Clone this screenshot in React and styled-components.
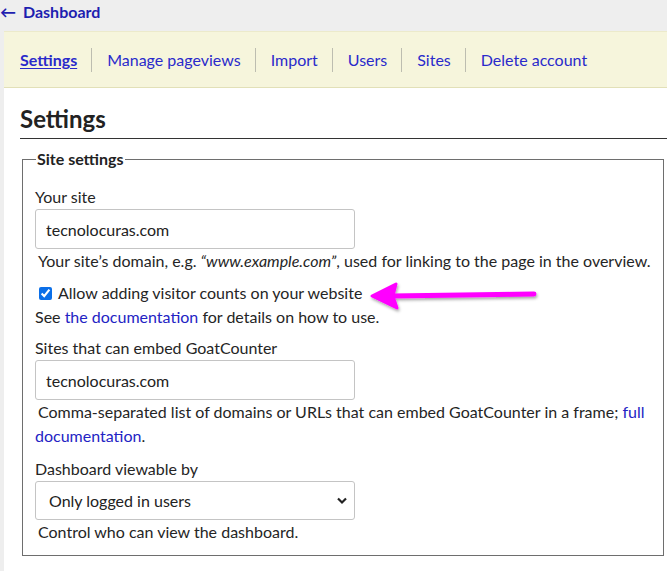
import React from 'react';
import styled, { createGlobalStyle } from 'styled-components';

const GlobalStyle = createGlobalStyle`
  html, body {
    margin: 0;
    padding: 0;
    background: #eee;
  }
  body {
    font-family: Lato, "Open Sans", sans-serif;
    font-size: 16px;
    line-height: 24px;
    color: #252525;
  }
  a {
    color: #2323c4;
    text-decoration: none;
  }
`;

const Page = styled.div`
  width: 667px;
  height: 571px;
  overflow: hidden;
`;

const Back = styled.a`
  display: block;
  height: 31px;
  line-height: 23px;
  font-size: 16px;
  font-weight: 700;
  color: #1e1eb0;
`;

const BackArrow = styled.span`
  margin-right: 7px;
`;

const Main = styled.div`
  margin-left: 4px;
  background: #fff;
  min-height: 600px;
`;

const Nav = styled.nav`
  display: flex;
  align-items: center;
  height: 55px;
  padding-left: 16px;
  background: #f6f5dc;
  border-top: 1px solid #eceacb;
  border-bottom: 1px solid #e2e0b8;
`;

const NavLink = styled.a`
  font-size: 16px;
  line-height: 22px;
  color: #2a2acb;
  text-decoration: ${(p) => (p.$active ? 'underline' : 'none')};
  font-weight: ${(p) => (p.$active ? 700 : 400)};
  text-underline-offset: 2px;
`;

const Sep = styled.span`
  width: 1px;
  height: 24px;
  margin: 0 15px 0 14px;
  background: #bdbdb0;
`;

const Content = styled.div`
  position: relative;
  padding: 0 0 0 16px;
`;

const Heading = styled.h1`
  margin: 0;
  padding-top: 14px;
  font-size: 24px;
  line-height: 34px;
  font-weight: 700;
  color: #222;
  border-bottom: 1px solid #333;
  height: 36px;
`;

const Fieldset = styled.fieldset`
  margin: 8px 3px 0 2px;
  padding: 0 12px 11px 12px;
  border: 1px solid #6e6e6e;
`;

const Legend = styled.legend`
  padding: 0 1px;
  margin-left: 1px;
  font-size: 16px;
  font-weight: 700;
  line-height: 24px;
  color: #222;
`;

const Field = styled.div`
  display: flex;
  flex-direction: column;
  align-items: flex-start;
  padding-top: ${(p) => p.$top || 0}px;
`;

const Label = styled.label`
  line-height: 24px;
`;

const TextInput = styled.input`
  box-sizing: border-box;
  width: 320px;
  height: 40px;
  padding: 0 10px;
  border: 1px solid #c4c4c4;
  border-radius: 3px;
  font: inherit;
  font-size: 16px;
  color: #222;
  background: #fff;
  outline: none;
`;

const SelectWrap = styled.div`
  position: relative;
  width: 320px;
  height: 39px;
`;

const Select = styled.select`
  box-sizing: border-box;
  width: 100%;
  height: 100%;
  padding: 0 13px;
  appearance: none;
  border: 1px solid #c4c4c4;
  border-radius: 3px;
  font: inherit;
  font-size: 16px;
  color: #222;
  background: #fff;
`;

const Chevron = styled.svg`
  position: absolute;
  right: 7px;
  top: 15px;
  pointer-events: none;
`;

const Help = styled.div`
  padding-left: ${(p) => (p.$wrap ? 0 : 3)}px;
  text-indent: ${(p) => (p.$wrap ? 3 : 0)}px;
  line-height: 24px;
`;

const CheckRow = styled.label`
  display: flex;
  align-items: center;
  gap: 6px;
  margin-top: 8px;
  padding-left: 3px;
  line-height: 24px;
`;

const Check = styled.input`
  width: 13px;
  height: 13px;
  margin: 0 0 0 1px;
  accent-color: #0b6fe8;
`;

const Arrow = styled.svg`
  position: absolute;
  left: 362px;
  top: 185px;
`;

export default function App() {
  return (
    <Page>
      <GlobalStyle />
      <Back href="#"><BackArrow>←</BackArrow>Dashboard</Back>
      <Main>
        <Nav>
          <NavLink href="#" $active>Settings</NavLink>
          <Sep />
          <NavLink href="#">Manage pageviews</NavLink>
          <Sep />
          <NavLink href="#">Import</NavLink>
          <Sep />
          <NavLink href="#">Users</NavLink>
          <Sep />
          <NavLink href="#">Sites</NavLink>
          <Sep />
          <NavLink href="#">Delete account</NavLink>
        </Nav>
        <Content>
          <Heading>Settings</Heading>
          <Fieldset>
            <Legend>Site settings</Legend>
            <Field $top={14}>
              <Label>Your site</Label>
              <TextInput defaultValue="tecnolocuras.com" />
              <Help>
                Your site’s domain, e.g. <i>“www.example.com”</i>, used for linking to the page in the overview.
              </Help>
            </Field>
            <CheckRow>
              <Check type="checkbox" defaultChecked />
              Allow adding visitor counts on your website
            </CheckRow>
            <div>
              See <a href="#">the documentation</a> for details on how to use.
            </div>
            <Field $top={7}>
              <Label>Sites that can embed GoatCounter</Label>
              <TextInput defaultValue="tecnolocuras.com" />
              <Help $wrap>
                Comma-separated list of domains or URLs that can embed GoatCounter in a frame; <a href="#">full documentation</a>.
              </Help>
            </Field>
            <Field $top={9}>
              <Label>Dashboard viewable by</Label>
              <SelectWrap>
                <Select defaultValue="logged">
                  <option value="logged">Only logged in users</option>
                  <option value="all">Anyone</option>
                </Select>
                <Chevron width="12" height="9" viewBox="0 0 12 9">
                  <path d="M2 2.5 L6 6.5 L10 2.5" fill="none" stroke="#222" strokeWidth="2.2" />
                </Chevron>
              </SelectWrap>
              <Help>Control who can view the dashboard.</Help>
            </Field>
          </Fieldset>
          <Arrow width="180" height="46" viewBox="0 0 180 46">
            <defs>
              <filter id="sh" x="-10%" y="-30%" width="130%" height="160%">
                <feDropShadow dx="1" dy="2" stdDeviation="1.5" floodColor="#000" floodOpacity="0.35" />
              </filter>
            </defs>
            <g filter="url(#sh)" fill="#ff00ff" stroke="#ff00ff" strokeLinecap="round" strokeLinejoin="round">
              <line x1="26" y1="23" x2="168" y2="21" strokeWidth="5" />
              <path d="M6 23 L30 11 L27 23 L31 35 Z" strokeWidth="3" />
            </g>
          </Arrow>
        </Content>
      </Main>
    </Page>
  );
}
